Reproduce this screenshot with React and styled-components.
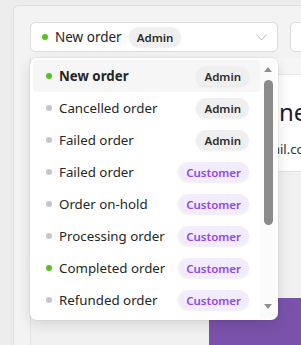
import React from "react";
import styled, { createGlobalStyle } from "styled-components";

const GlobalStyle = createGlobalStyle`
  html, body {
    margin: 0;
    padding: 0;
    background: #ededed;
    font-family: "Noto Sans", "Open Sans", sans-serif;
  }
`;

const ITEMS = [
  { label: "New order", role: "admin", active: true, on: true },
  { label: "Cancelled order", role: "admin" },
  { label: "Failed order", role: "admin" },
  { label: "Failed order", role: "customer" },
  { label: "Order on-hold", role: "customer" },
  { label: "Processing order", role: "customer" },
  { label: "Completed order", role: "customer", on: true },
  { label: "Refunded order", role: "customer" },
];

const Page = styled.div`
  height: 345px;
  box-sizing: border-box;
  padding: 5px 0 0 13px;
  overflow: hidden;
`;

const Panel = styled.div`
  height: 100%;
  box-sizing: border-box;
  padding: 16px 0 0 16px;
  background: #f3f3f3;
  border: 1px solid #e0e0e0;
  border-right: none;
  border-bottom: none;
  border-radius: 6px 0 0 0;
`;

const Toolbar = styled.div`
  display: flex;
  gap: 12px;
`;

const SelectWrap = styled.div`
  position: relative;
  flex: none;
  width: ${(p) => p.width}px;
`;

const Trigger = styled.div`
  height: 30px;
  box-sizing: border-box;
  display: flex;
  align-items: center;
  gap: 7px;
  padding: 0 10px 0 11px;
  background: #fff;
  border: 1px solid #dcdcdc;
  border-radius: 5px;
  color: #242424;
  font-size: 13.5px;
`;

const Chevron = styled.svg`
  margin-left: auto;
  flex: none;
`;

const Dot = styled.span`
  width: 6px;
  height: 6px;
  border-radius: 50%;
  flex: none;
  background: ${(p) => (p.on ? "#52c41a" : "#c6c6c6")};
`;

const Badge = styled.span`
  height: 20px;
  display: inline-flex;
  align-items: center;
  padding: 0 8px;
  border-radius: 10px;
  font-size: 11.5px;
  font-weight: 600;
  flex: none;
  box-shadow: 0 1px 2px rgba(0, 0, 0, 0.07);
  background: ${(p) => (p.role === "customer" ? "#f3ebff" : "#efefef")};
  color: ${(p) => (p.role === "customer" ? "#8f45f0" : "#2b2b2b")};
`;

const Menu = styled.div`
  position: absolute;
  top: 36px;
  left: 0;
  width: 248px;
  height: 262px;
  box-sizing: border-box;
  display: flex;
  padding: 2px 2px 2px 3px;
  background: #fff;
  border-radius: 7px;
  box-shadow: 0 4px 14px rgba(0, 0, 0, 0.13), 0 0 0 1px rgba(0, 0, 0, 0.03);
  z-index: 5;
`;

const List = styled.div`
  flex: 1;
  min-width: 0;
  overflow: hidden;
  display: flex;
  flex-direction: column;
`;

const Row = styled.div`
  height: 32px;
  flex: none;
  display: flex;
  align-items: center;
  gap: 7px;
  padding: 0 11px 0 13px;
  border-radius: 4px;
  background: ${(p) => (p.active ? "#f6f6f6" : "transparent")};
`;

const Label = styled.span`
  flex: 1;
  font-size: 13.3px;
  color: #262626;
  font-weight: ${(p) => (p.active ? 700 : 400)};
  white-space: nowrap;
`;

const Scrollbar = styled.div`
  width: 16px;
  flex: none;
  display: flex;
  flex-direction: column;
  align-items: center;
  padding: 7px 0 9px;
  background: #fbfbfb;
`;

const Arrow = styled.span`
  width: 0;
  height: 0;
  border-left: 4.5px solid transparent;
  border-right: 4.5px solid transparent;
  ${(p) => (p.down ? "border-top" : "border-bottom")}: 5px solid #8f8f8f;
  margin-top: ${(p) => (p.down ? "auto" : "0")};
`;

const Thumb = styled.span`
  width: 9px;
  height: 145px;
  margin-top: 8px;
  border-radius: 5px;
  background: #8b8b8b;
`;

const Body = styled.div`
  margin-top: 6px;
  height: 300px;
  display: flex;
  flex-direction: column;
  border-left: 1px solid #e2e2e2;
`;

const Strip = styled.div`
  height: 16px;
  background: #f6f6f6;
  border-bottom: 1px solid #e6e6e6;
`;

const Preview = styled.div`
  height: 100px;
  box-sizing: border-box;
  display: flex;
  flex-direction: column;
  background: #fff;
  border-bottom: 1px solid #e4e4e4;
  padding-top: 20px;
  overflow: hidden;
`;

const Heading = styled.div`
  font-size: 24px;
  color: #1d1d2b;
  white-space: nowrap;
  padding-left: 190px;
`;

const Email = styled.div`
  margin-top: 12px;
  font-size: 13px;
  color: #333;
  white-space: nowrap;
  padding-left: 171px;
`;

const Footer = styled.div`
  flex: 1;
  padding: 126px 0 0 178px;
  background: #f1f1f1;
`;

const Banner = styled.div`
  height: 60px;
  background: #7b52ab;
`;

const App = () => (
  <Page>
    <GlobalStyle />
    <Panel>
      <Toolbar>
        <SelectWrap width={248}>
          <Trigger>
            <Dot on />
            <span>New order</span>
            <Badge role="admin">Admin</Badge>
            <Chevron width="11" height="7" viewBox="0 0 11 7">
              <polyline points="0.5,0.5 5.5,6 10.5,0.5" fill="none" stroke="#b8b8b8" strokeWidth="1" />
            </Chevron>
          </Trigger>
          <Menu>
            <List>
              {ITEMS.map((item, i) => (
                <Row key={i} active={item.active}>
                  <Dot on={item.on} />
                  <Label active={item.active}>{item.label}</Label>
                  <Badge role={item.role}>{item.role === "admin" ? "Admin" : "Customer"}</Badge>
                </Row>
              ))}
            </List>
            <Scrollbar>
              <Arrow />
              <Thumb />
              <Arrow down />
            </Scrollbar>
          </Menu>
        </SelectWrap>
        <SelectWrap width={200}>
          <Trigger />
        </SelectWrap>
      </Toolbar>
      <Body>
        <Strip />
        <Preview>
          <Heading>Your new order</Heading>
          <Email>admin@gmail.com</Email>
        </Preview>
        <Footer>
          <Banner />
        </Footer>
      </Body>
    </Panel>
  </Page>
);

export default App;
